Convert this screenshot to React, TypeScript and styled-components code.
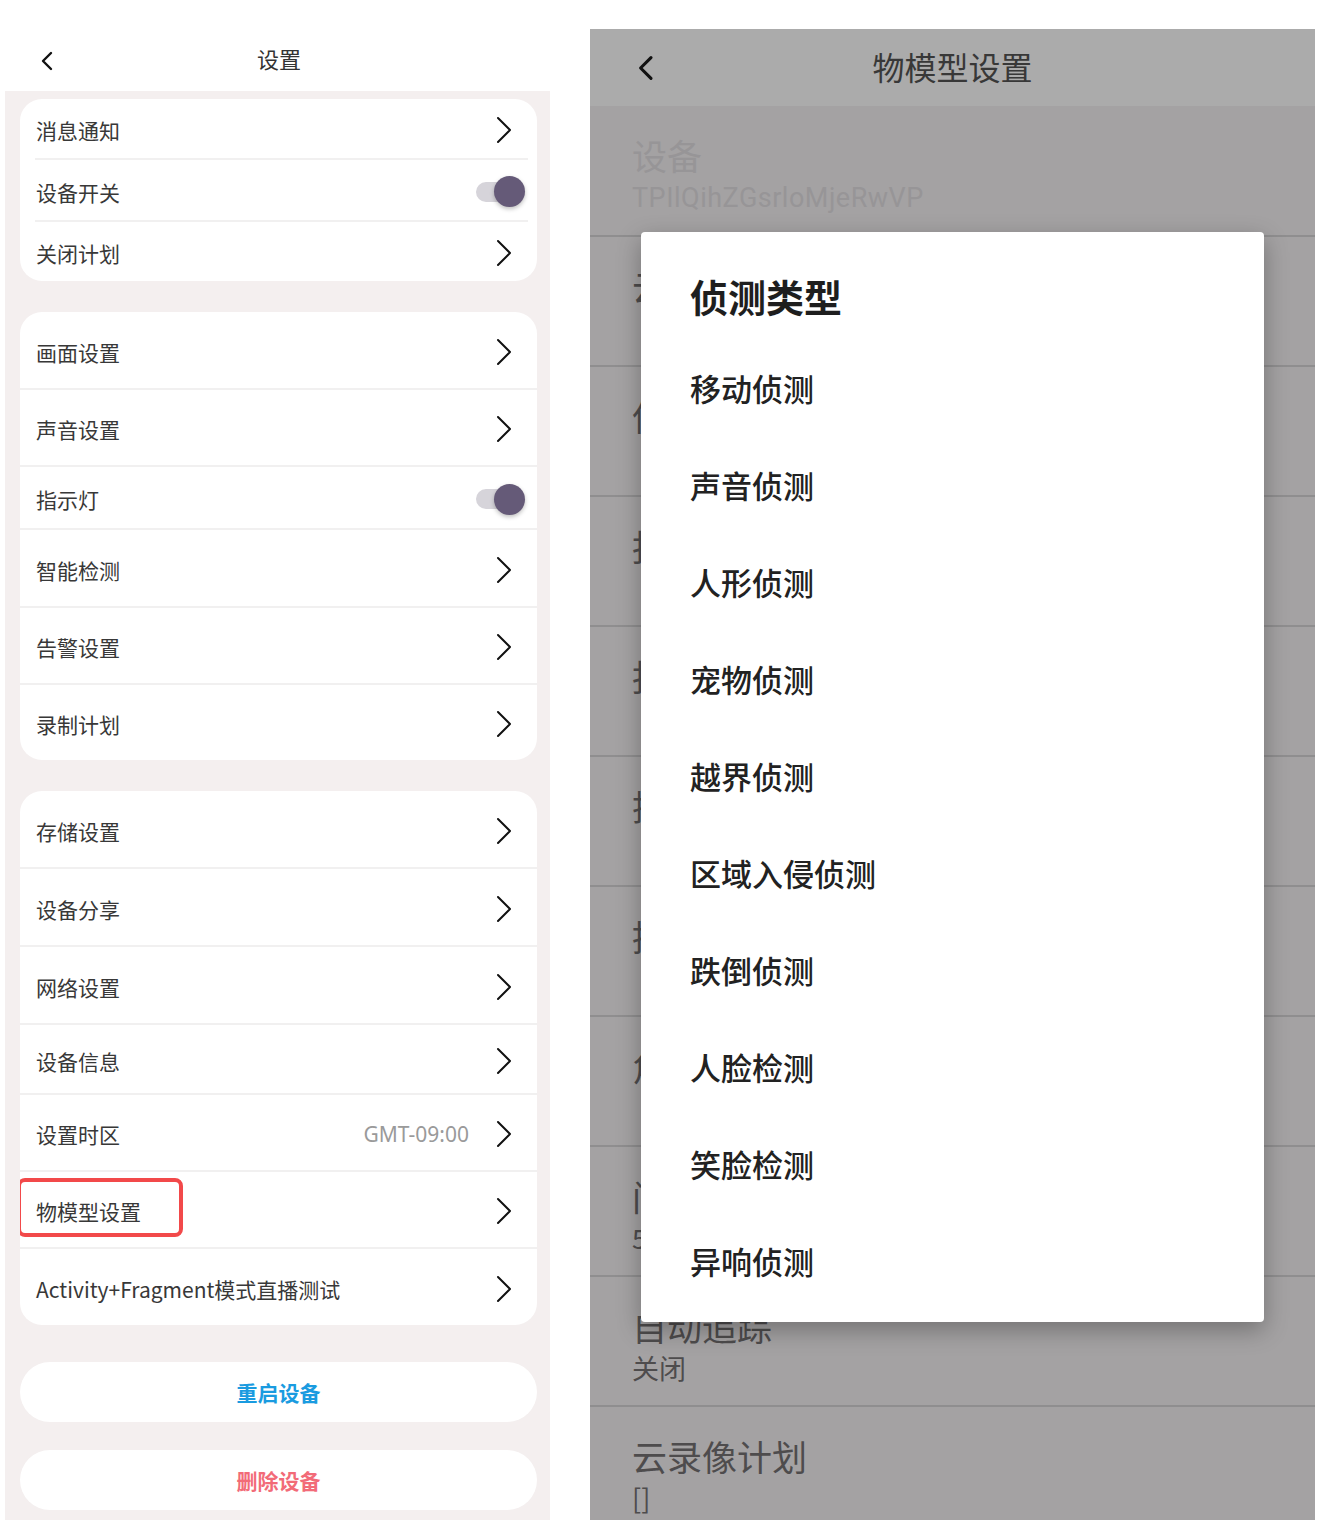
import styled, { createGlobalStyle } from 'styled-components';

const GlobalStyle = createGlobalStyle`
    body {
        margin: 0;
        background: #ffffff;
        font-family: "Noto Sans CJK SC", "Noto Sans", sans-serif;
    }
`

type Item = {
    label: string;
    h: number;
    kind?: 'arrow' | 'toggle';
    value?: string;
    highlight?: boolean;
}

const group1: Item[] = [
    { label: '消息通知', h: 59 },
    { label: '设备开关', h: 60, kind: 'toggle' },
    { label: '关闭计划', h: 59 },
]

const group2: Item[] = [
    { label: '画面设置', h: 76 },
    { label: '声音设置', h: 75 },
    { label: '指示灯', h: 61, kind: 'toggle' },
    { label: '智能检测', h: 76 },
    { label: '告警设置', h: 75 },
    { label: '录制计划', h: 75 },
]

const group3: Item[] = [
    { label: '存储设置', h: 76 },
    { label: '设备分享', h: 76 },
    { label: '网络设置', h: 76 },
    { label: '设备信息', h: 68 },
    { label: '设置时区', h: 75, value: 'GMT-09:00' },
    { label: '物模型设置', h: 75, highlight: true },
    { label: 'Activity+Fragment模式直播测试', h: 76 },
]

const props = [
    { title: '云存储', value: '' },
    { title: '侦测类型', value: '' },
    { title: '报警声音', value: '' },
    { title: '报警灯光', value: '' },
    { title: '抓拍模式', value: '' },
    { title: '推送通知', value: '' },
    { title: '角度校正', value: '' },
    { title: '间隔时间', value: '5' },
    { title: '自动追踪', value: '关闭' },
    { title: '云录像计划', value: '[]' },
]

const detectTypes = [
    '移动侦测', '声音侦测', '人形侦测', '宠物侦测', '越界侦测',
    '区域入侵侦测', '跌倒侦测', '人脸检测', '笑脸检测', '异响侦测',
]

function Chevron() {
    return (
        <svg width="16" height="28" viewBox="0 0 16 28">
            <path d="M2 2 L14 14 L2 26" fill="none" stroke="#111" strokeWidth="2" strokeLinecap="round" strokeLinejoin="round" />
        </svg>
    )
}

function BackArrow({ size }: { size: number }) {
    return (
        <svg width={size * 0.6} height={size} viewBox="0 0 12 20">
            <path d="M10 2 L2 10 L10 18" fill="none" stroke="#111" strokeWidth="2.4" strokeLinecap="round" strokeLinejoin="round" />
        </svg>
    )
}

function SettingsGroup({ items, inset }: { items: Item[]; inset?: boolean }) {
    return (
        <Card>
            {items.map((it, i) => (
                <div key={it.label}>
                    {i > 0 && <Divider $inset={inset} />}
                    <Row $h={it.h}>
                        <Label $highlight={it.highlight}>{it.label}</Label>
                        {it.value && <Value>{it.value}</Value>}
                        {it.kind === 'toggle' ? (
                            <Switch><Thumb /></Switch>
                        ) : (
                            <Chevron />
                        )}
                    </Row>
                </div>
            ))}
        </Card>
    )
}

function SettingsScreen() {
    return (
        <LeftPanel>
            <Header>
                <HeaderBack><BackArrow size={20} /></HeaderBack>
                <HeaderTitle>设置</HeaderTitle>
            </Header>
            <Body>
                <SettingsGroup items={group1} inset />
                <SettingsGroup items={group2} />
                <SettingsGroup items={group3} />
                <ActionButton $color="#1a9be0">重启设备</ActionButton>
                <ActionButton $color="#f26b78">删除设备</ActionButton>
            </Body>
        </LeftPanel>
    )
}

function ModelScreen() {
    return (
        <RightPanel>
            <DimHeader>
                <DimBack><BackArrow size={26} /></DimBack>
                <DimTitle>物模型设置</DimTitle>
            </DimHeader>
            <PropRow $first>
                <PropTitle $muted>设备</PropTitle>
                <DeviceId>TPIlQihZGsrloMjeRwVP</DeviceId>
            </PropRow>
            {props.map(p => (
                <PropRow key={p.title}>
                    <PropTitle>{p.title}</PropTitle>
                    {p.value && <PropValue>{p.value}</PropValue>}
                </PropRow>
            ))}
            <Dialog>
                <DialogTitle>侦测类型</DialogTitle>
                {detectTypes.map(t => (
                    <Option key={t}>{t}</Option>
                ))}
            </Dialog>
        </RightPanel>
    )
}

export default function App() {
    return (
        <>
            <GlobalStyle />
            <Page>
                <SettingsScreen />
                <ModelScreen />
            </Page>
        </>
    )
}

const Page = styled.div`
    display: flex;
    align-items: flex-start;
    gap: 40px;
    padding-left: 5px;
    height: 1520px;
    overflow: hidden;
`

const LeftPanel = styled.div`
    width: 545px;
    display: flex;
    flex-direction: column;
`

const Header = styled.div`
    height: 63px;
    padding-top: 28px;
    background: #ffffff;
    display: flex;
    align-items: center;
    justify-content: center;
    position: relative;
`

const HeaderBack = styled.div`
    position: absolute;
    left: 36px;
    top: 51px;
    display: flex;
`

const HeaderTitle = styled.div`
    font-size: 22px;
    color: #333;
    padding-left: 3px;
    margin-top: -3px;
`

const Body = styled.div`
    background: #f4efef;
    padding: 8px 13px 10px 15px;
    display: flex;
    flex-direction: column;
    gap: 31px;
    min-height: 1420px;
`

const Card = styled.div`
    background: #ffffff;
    border-radius: 22px;
    overflow: hidden;
`

const Divider = styled.div<{ $inset?: boolean }>`
    height: 2px;
    background: #f1f0f0;
    margin: ${p => (p.$inset ? '0 9px 0 15px' : '0')};
`

const Row = styled.div<{ $h: number }>`
    height: ${p => p.$h}px;
    display: flex;
    align-items: center;
    padding: 3px 25px 0 16px;
    box-sizing: border-box;
`

const Label = styled.span<{ $highlight?: boolean }>`
    flex: 1;
    font-size: 21px;
    color: #383838;
    position: relative;

    ${p => p.$highlight && `
        &::after {
            content: '';
            position: absolute;
            left: -19px;
            top: -18px;
            width: 166px;
            height: 59px;
            box-sizing: border-box;
            border: 4px solid #f2494a;
            border-radius: 8px;
        }
    `}
`

const Value = styled.span`
    font-size: 21px;
    color: #9a9a9a;
    margin-right: 27px;
    font-family: "Noto Sans", "Noto Sans CJK SC", sans-serif;
`

const Switch = styled.div`
    width: 40px;
    height: 20px;
    border-radius: 10px;
    background: #d6d4da;
    margin-right: -4px;
    display: flex;
    align-items: center;
    justify-content: flex-end;
`

const Thumb = styled.div`
    width: 31px;
    height: 31px;
    border-radius: 50%;
    background: #655a78;
    margin-right: -9px;
    box-shadow: 0 2px 4px rgba(0, 0, 0, 0.25);
`

const ActionButton = styled.div<{ $color: string }>`
    height: 60px;
    border-radius: 30px;
    background: #ffffff;
    display: flex;
    align-items: center;
    justify-content: center;
    font-size: 21px;
    font-weight: 700;
    color: ${p => p.$color};
    margin-top: 6px;

    & + & {
        margin-top: -3px;
    }
`

const RightPanel = styled.div`
    width: 725px;
    margin-top: 29px;
    background: #a4a2a3;
    position: relative;
    min-height: 1491px;
`

const DimHeader = styled.div`
    height: 77px;
    background: #ababab;
    display: flex;
    align-items: center;
    justify-content: center;
    position: relative;
`

const DimBack = styled.div`
    position: absolute;
    left: 48px;
    top: 26px;
    display: flex;
`

const DimTitle = styled.div`
    font-size: 32px;
    color: #383838;
    padding-left: 0;
    margin-top: -3px;
`

const PropRow = styled.div<{ $first?: boolean }>`
    height: ${p => (p.$first ? 131 : 130)}px;
    border-bottom: 2px solid #8f8e8f;
    padding: 27px 0 0 42px;
    box-sizing: border-box;
    display: flex;
    flex-direction: column;
`

const PropTitle = styled.div<{ $muted?: boolean }>`
    font-size: 35px;
    line-height: 44px;
    color: ${p => (p.$muted ? '#979597' : '#4e4c4d')};
`

const PropValue = styled.div`
    font-size: 27px;
    line-height: 40px;
    color: #4e4c4d;
`

const DeviceId = styled.div`
    font-family: Roboto, "Noto Sans", sans-serif;
    font-size: 27px;
    line-height: 42px;
    color: #979597;
    letter-spacing: 0.5px;
`

const Dialog = styled.div`
    position: absolute;
    left: 51px;
    top: 203px;
    width: 623px;
    height: 1090px;
    background: #ffffff;
    border-radius: 4px;
    box-shadow: 0 8px 24px rgba(0, 0, 0, 0.3);
    padding: 38px 0 0 49px;
    box-sizing: border-box;
    display: flex;
    flex-direction: column;
`

const DialogTitle = styled.div`
    font-size: 38px;
    line-height: 52px;
    font-weight: 700;
    color: #1e1e1e;
    margin-bottom: 17px;
`

const Option = styled.div`
    height: 97px;
    display: flex;
    align-items: center;
    font-size: 31px;
    font-weight: 500;
    color: #222;
`
